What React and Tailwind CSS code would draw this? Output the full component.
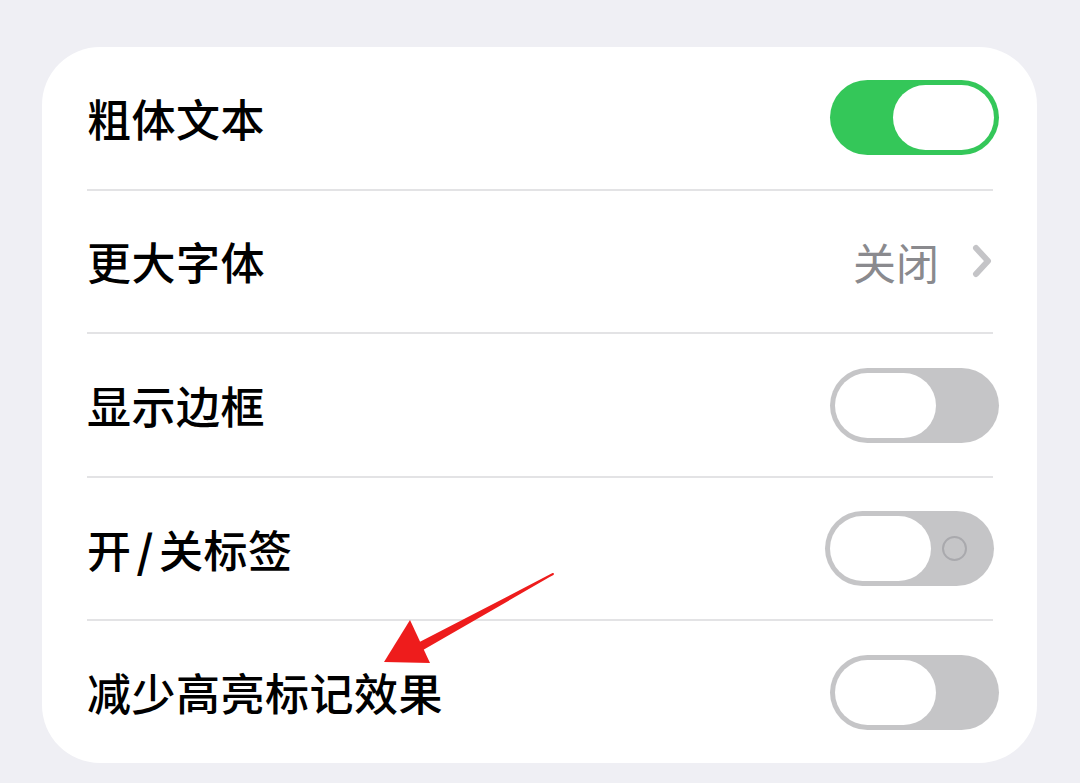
import React from "react";

const font = { fontFamily: '"Noto Sans CJK SC", "Noto Sans", sans-serif' };

const Toggle = ({ on, labels, shift }) => {
  return (
    <div
      className={`relative w-[169px] h-[75px] rounded-full ${on ? "bg-[#34c759]" : "bg-[#c5c5c7]"} ${shift ? "mr-[43px]" : "mr-[38px]"}`}
    >
      {labels && (
        <div className="absolute left-[117px] top-[25px] w-[25px] h-[25px] rounded-full border-2 border-[#a9a9ad]" />
      )}
      <div
        className={`absolute top-[5px] h-[65px] w-[101px] rounded-full bg-white ${on ? "right-[5px]" : "left-[5px]"}`}
      />
    </div>
  );
};

const Row = ({ label, children }) => (
  <div className="flex items-center justify-between h-[142px] pl-[45px]">
    <span className="text-[44px] font-medium text-black leading-none tracking-[0.5px]" style={font}>
      {label}
    </span>
    {children}
  </div>
);

const Divider = () => <div className="h-[2px] bg-[#e3e3e5] ml-[45px] mr-[44px]" />;

export default function App() {
  return (
    <div className="relative w-[1080px] h-[783px] bg-[#efeff4] pt-[47px] pl-[42px] overflow-hidden">
      <div className="w-[995px] h-[716px] bg-white rounded-[58px] flex flex-col">
        <Row label="粗体文本">
          <Toggle on />
        </Row>
        <Divider />
        <Row label="更大字体">
          <div className="flex items-center mr-[44px]">
            <span className="text-[43px] text-[#8a8a8e] leading-none" style={font}>
              关闭
            </span>
            <svg width="22" height="34" viewBox="0 0 22 34" className="ml-[32px]">
              <polyline
                points="5,4 17,17 5,30"
                fill="none"
                stroke="#c4c4c7"
                strokeWidth="6"
                strokeLinecap="round"
                strokeLinejoin="round"
              />
            </svg>
          </div>
        </Row>
        <Divider />
        <Row label="显示边框">
          <Toggle />
        </Row>
        <Divider />
        <Row
          label={
            <>
              开<span className="mx-[5px] font-bold">/</span>关标签
            </>
          }
        >
          <Toggle labels shift />
        </Row>
        <Divider />
        <Row label="减少高亮标记效果">
          <Toggle />
        </Row>
      </div>

      {/* red arrow annotation */}
      <svg className="absolute left-0 top-0 pointer-events-none" width="1080" height="783">
        <path d="M553,574 L420,643 L423,649 Z" fill="#ee1c1c" stroke="#ee1c1c" strokeWidth="2" strokeLinejoin="round" />
        <polygon points="384,662 410,620 430,663" fill="#ee1c1c" />
      </svg>
    </div>
  );
}
